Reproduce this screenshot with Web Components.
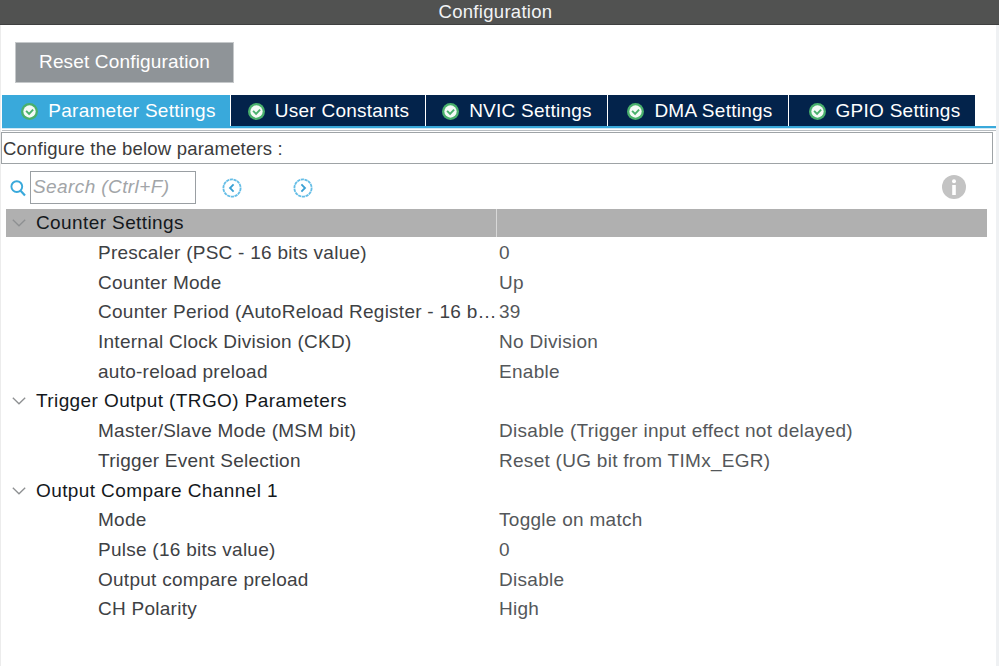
<!DOCTYPE html>
<html>
<head>
<meta charset="utf-8">
<title>Configuration</title>
<style>
  html, body { margin: 0; height: 100%; background: #fff; overflow: hidden; }
  body { font-family: "Liberation Sans", Arial, sans-serif; font-size: 19px; }
  config-panel { height: 666px; }
</style>
</head>
<body>
<config-panel>
  <title-bar>Configuration</title-bar>
  <reset-button>Reset Configuration</reset-button>
  <tab-strip>
    <config-tab active>Parameter Settings</config-tab>
    <config-tab style="width:194px;padding-left:1px">User Constants</config-tab>
    <config-tab style="width:181px;padding-left:1px">NVIC Settings</config-tab>
    <config-tab style="width:180px;padding-left:4px">DMA Settings</config-tab>
    <config-tab style="width:186px">GPIO Settings</config-tab>
  </tab-strip>
  <hint-box>Configure the below parameters :</hint-box>
  <search-bar></search-bar>
  <param-tree>
    <param-group label="Counter Settings" selected></param-group>
    <param-row name="Prescaler (PSC - 16 bits value)" value="0"></param-row>
    <param-row name="Counter Mode" value="Up"></param-row>
    <param-row name="Counter Period (AutoReload Register - 16 b…" value="39"></param-row>
    <param-row name="Internal Clock Division (CKD)" value="No Division"></param-row>
    <param-row name="auto-reload preload" value="Enable"></param-row>
    <param-group label="Trigger Output (TRGO) Parameters"></param-group>
    <param-row name="Master/Slave Mode (MSM bit)" value="Disable (Trigger input effect not delayed)"></param-row>
    <param-row name="Trigger Event Selection" value="Reset (UG bit from TIMx_EGR)"></param-row>
    <param-group label="Output Compare Channel 1"></param-group>
    <param-row name="Mode" value="Toggle on match"></param-row>
    <param-row name="Pulse (16 bits value)" value="0"></param-row>
    <param-row name="Output compare preload" value="Disable"></param-row>
    <param-row name="CH Polarity" value="High"></param-row>
  </param-tree>
</config-panel>

<script>
  // small helper, every element just sets its shadow html once
  class Base extends HTMLElement {
    constructor() {
      super();
      this.attachShadow({ mode: 'open' });
    }
    connectedCallback() {
      this.shadowRoot.innerHTML = this.render();
    }
  }

  class ConfigPanel extends Base {
    render() {
      return `
        <style>
          :host {
            display: flex;
            flex-direction: column;
            box-sizing: border-box;
            border-left: 1px solid #ececec;
            border-right: 3px solid #eff1f3;
            background: #fff;
          }
        </style>
        <slot></slot>
      `;
    }
  }

  class TitleBar extends Base {
    render() {
      return `
        <style>
          :host {
            display: block;
            margin: 0 -3px 0 -1px;
            padding-right: 8px;
            height: 25px;
            line-height: 24px;
            box-sizing: border-box;
            background: #515251;
            border-bottom: 1px solid #3f4040;
            color: #f2f4f6;
            text-align: center;
            font-size: 18.5px;
            letter-spacing: .3px;
          }
        </style>
        <slot></slot>
      `;
    }
  }

  class ResetButton extends Base {
    render() {
      return `
        <style>
          :host {
            display: flex;
            align-items: center;
            justify-content: center;
            box-sizing: border-box;
            width: 219px;
            height: 41px;
            margin: 17px 0 0 14px;
            padding-bottom: 1px;
            background: #8f9498;
            border: 1px solid #c5c8ca;
            color: #fff;
            font-size: 19px;
            letter-spacing: .16px;
          }
        </style>
        <slot></slot>
      `;
    }
  }

  class TabStrip extends Base {
    render() {
      return `
        <style>
          :host {
            display: flex;
            gap: 1px;
            box-sizing: border-box;
            height: 36px;
            margin: 12px 0 0 1px;
            padding-bottom: 4px;
            border-bottom: 1px solid #b9bec2;
            position: relative;
          }
          .line {
            position: absolute;
            left: 0;
            right: 0;
            bottom: 1px;
            height: 2px;
            background: #39a9db;
            border-bottom: 1px solid #cfe8f4;
          }
        </style>
        <slot></slot>
        <div class="line"></div>
      `;
    }
  }

  class ConfigTab extends Base {
    render() {
      const active = this.hasAttribute('active');
      return `
        <style>
          :host {
            display: flex;
            align-items: center;
            justify-content: center;
            gap: 10px;
            box-sizing: border-box;
            width: 228px;
            height: 32px;
            padding-left: 5px;
            background: ${active ? '#39a9db' : '#03234b'};
            color: #fff;
            font-size: 19px;
            letter-spacing: .26px;
            white-space: nowrap;
          }
          svg { width: 17px; height: 17px; flex: none; }
        </style>
        <svg viewBox="0 0 16 16">
          <circle cx="8" cy="8" r="8" fill="#49b06c"/>
          <circle cx="8" cy="8" r="5.8" fill="#f4faf6"/>
          <path d="M4.8 7.4 7.6 10.2 11.4 6.2" fill="none" stroke="#49b06c" stroke-width="1.8"/>
        </svg>
        <slot></slot>
      `;
    }
  }

  class HintBox extends Base {
    render() {
      return `
        <style>
          :host {
            display: block;
            box-sizing: border-box;
            height: 32px;
            line-height: 31px;
            margin: 1px 3px 0 0;
            padding-left: 1px;
            border: 1px solid #9ea3a6;
            color: #3b3b3b;
            font-size: 18.5px;
            letter-spacing: .2px;
            white-space: nowrap;
          }
        </style>
        <slot></slot>
      `;
    }
  }

  class SearchBar extends Base {
    render() {
      return `
        <style>
          :host {
            display: flex;
            align-items: center;
            box-sizing: border-box;
            height: 33px;
            margin-top: 7px;
            padding: 0 30px 0 9px;
          }
          .find { width: 16px; height: 18px; flex: none; margin-right: 4px; }
          .input {
            box-sizing: border-box;
            width: 166px;
            height: 33px;
            line-height: 30px;
            padding-left: 2px;
            border: 1px solid #9a9fa3;
            color: #a2a5a8;
            font-style: italic;
            font-size: 19px;
            letter-spacing: .4px;
            white-space: nowrap;
          }
          .nav { width: 20px; height: 20px; flex: none; margin-left: 51px; }
          .nav.first { margin-left: 26px; }
          .info { width: 24px; height: 24px; flex: none; margin: -2px 0 0 auto; }
        </style>
        <svg class="find" viewBox="0 0 16 18">
          <circle cx="6.8" cy="7.6" r="5.4" fill="none" stroke="#39a9db" stroke-width="1.9"/>
          <path d="M10.6 11.8 15 16.4" stroke="#39a9db" stroke-width="2.2"/>
        </svg>
        <div class="input">Search (Ctrl+F)</div>
        <svg class="nav first" viewBox="0 0 20 20">
          <circle cx="10" cy="10" r="8.6" fill="none" stroke="#64bde6" stroke-width="1.8" stroke-dasharray="3.2 .6"/>
          <path d="M11.6 6.4 8 10 11.6 13.6" fill="none" stroke="#39a0d4" stroke-width="1.8"/>
        </svg>
        <svg class="nav" viewBox="0 0 20 20">
          <circle cx="10" cy="10" r="8.6" fill="none" stroke="#64bde6" stroke-width="1.8" stroke-dasharray="3.2 .6"/>
          <path d="M8.4 6.4 12 10 8.4 13.6" fill="none" stroke="#39a0d4" stroke-width="1.8"/>
        </svg>
        <svg class="info" viewBox="0 0 24 24">
          <circle cx="12" cy="12" r="12" fill="#c3c3c3"/>
          <circle cx="12" cy="6.2" r="2" fill="#fff"/>
          <rect x="10.2" y="10" width="3.6" height="10" fill="#fff"/>
        </svg>
      `;
    }
  }

  class ParamTree extends Base {
    render() {
      return `
        <style>
          :host {
            display: flex;
            flex-direction: column;
            margin: 5px 9px 0 5px;
            font-size: 19px;
            letter-spacing: .26px;
          }
        </style>
        <slot></slot>
      `;
    }
  }

  class ParamGroup extends Base {
    render() {
      const sel = this.hasAttribute('selected');
      return `
        <style>
          :host {
            display: grid;
            grid-template-columns: 490px 1fr;
            box-sizing: border-box;
            height: ${sel ? '27.5px' : '29.7px'};
            ${sel ? 'margin-bottom: 1.2px;' : ''}
            background: ${sel ? '#b0b0b0' : 'transparent'};
            color: #14181c;
            letter-spacing: .4px;
          }
          .cell { display: flex; align-items: center; gap: 10px; padding: 1px 0 0 6px; white-space: nowrap; }
          .sep { ${sel ? 'border-left: 1px solid #d8d8d8;' : ''} }
          svg { width: 14px; height: 8px; flex: none; }
        </style>
        <div class="cell">
          <svg viewBox="0 0 14 8"><path d="M.8.8 7 6.8 13.2.8" fill="none" stroke="#8e9092" stroke-width="1.3"/></svg>
          <span>${this.getAttribute('label')}</span>
        </div>
        <div class="sep"></div>
      `;
    }
  }

  class ParamRow extends Base {
    render() {
      return `
        <style>
          :host {
            display: grid;
            grid-template-columns: 401px 1fr;
            box-sizing: border-box;
            height: 29.7px;
            align-items: center;
            padding: 1px 0 0 92px;
            color: #3e4144;
            white-space: nowrap;
          }
          .value { color: #54575a; letter-spacing: .28px; }
        </style>
        <div class="name">${this.getAttribute('name')}</div>
        <div class="value">${this.getAttribute('value')}</div>
      `;
    }
  }

  customElements.define('config-panel', ConfigPanel);
  customElements.define('title-bar', TitleBar);
  customElements.define('reset-button', ResetButton);
  customElements.define('tab-strip', TabStrip);
  customElements.define('config-tab', ConfigTab);
  customElements.define('hint-box', HintBox);
  customElements.define('search-bar', SearchBar);
  customElements.define('param-tree', ParamTree);
  customElements.define('param-group', ParamGroup);
  customElements.define('param-row', ParamRow);
</script>
</body>
</html>
